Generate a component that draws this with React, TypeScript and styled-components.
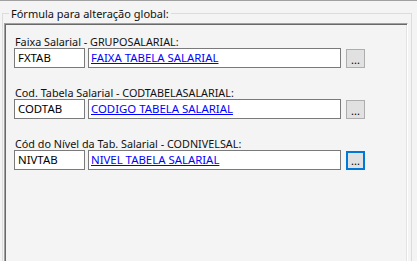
import React from 'react'
import styled, { createGlobalStyle } from 'styled-components'

const GlobalStyle = createGlobalStyle`
  html, body {
    margin: 0;
    padding: 0;
    background: #f4f4f4;
  }
  body {
    font-family: 'Noto Sans', 'Liberation Sans', Arial, sans-serif;
    font-size: 11px;
    color: #000;
  }
`

const Screen = styled.div`
  width: 417px;
  height: 261px;
  overflow: hidden;
  box-sizing: border-box;
  border-top: 1px solid #a0a0a0;
  background: #f4f4f4;
  padding: 12px 0 0 2px;
`

const GroupBox = styled.div`
  position: relative;
  width: 410px;
  height: 260px;
  box-sizing: border-box;
  border: 1px solid #dcdcdc;
  padding: 9px 3px 0 1px;
`

const Legend = styled.span`
  position: absolute;
  top: -7px;
  left: 6px;
  padding: 0 2px;
  background: #f4f4f4;
  line-height: 13px;
  color: #111;
`

const Panel = styled.div`
  height: 240px;
  box-sizing: border-box;
  border-top: 1px solid #a0a0a0;
  border-left: 1px solid #a0a0a0;
  border-right: 1px solid #ffffff;
  border-bottom: 1px solid #ffffff;
  box-shadow: inset 1px 1px 0 #696969, inset -1px -1px 0 #e3e3e3;
  padding: 11px 0 0 9px;
  display: flex;
  flex-direction: column;
  gap: 18px;
`

const Field = styled.div`
  display: flex;
  flex-direction: column;
`

const Label = styled.div`
  height: 13px;
  line-height: 13px;
  padding-left: 1px;
  font-size: 10.8px;
  color: #111;
  white-space: nowrap;
`

const Row = styled.div`
  display: flex;
  align-items: flex-start;
`

const Box = styled.div<{ $width: number }>`
  width: ${p => p.$width}px;
  height: 20px;
  box-sizing: border-box;
  border: 1px solid #7a7a7a;
  background: #fff;
  padding: 0 3px;
  font-size: 11.4px;
  line-height: 18px;
  white-space: nowrap;
  overflow: hidden;
`

const CodeBox = styled(Box)`
  margin-right: 3px;
`

const DescBox = styled(Box)`
  padding-left: 2px;
  margin-right: 5px;
`

const Link = styled.a`
  color: #0000ff;
  text-decoration: underline;
  cursor: pointer;
`

const LookupButton = styled.button<{ $focused?: boolean }>`
  width: 19px;
  height: 19px;
  margin-top: 1px;
  box-sizing: border-box;
  padding: 0;
  background: #e1e1e1;
  border: ${p => (p.$focused ? '2px solid #0078d7' : '1px solid #adadad')};
  font-family: 'Noto Sans', 'Liberation Sans', Arial, sans-serif;
  font-size: 11px;
  line-height: 14px;
  color: #000;
  display: flex;
  align-items: flex-end;
  justify-content: center;
`

const fields = [
  { label: 'Faixa Salarial - GRUPOSALARIAL:', code: 'FXTAB', desc: 'FAIXA TABELA SALARIAL' },
  { label: 'Cod. Tabela Salarial - CODTABELASALARIAL:', code: 'CODTAB', desc: 'CODIGO TABELA SALARIAL' },
  { label: 'Cód do Nível da Tab. Salarial - CODNIVELSAL:', code: 'NIVTAB', desc: 'NIVEL TABELA SALARIAL', focused: true },
]

export default function App() {
  return (
    <>
      <GlobalStyle />
      <Screen>
        <GroupBox>
          <Legend>Fórmula para alteração global:</Legend>
          <Panel>
            {fields.map(f => (
              <Field key={f.code}>
                <Label>{f.label}</Label>
                <Row>
                  <CodeBox $width={71}>{f.code}</CodeBox>
                  <DescBox $width={253}>
                    <Link>{f.desc}</Link>
                  </DescBox>
                  <LookupButton $focused={f.focused}>...</LookupButton>
                </Row>
              </Field>
            ))}
          </Panel>
        </GroupBox>
      </Screen>
    </>
  )
}
